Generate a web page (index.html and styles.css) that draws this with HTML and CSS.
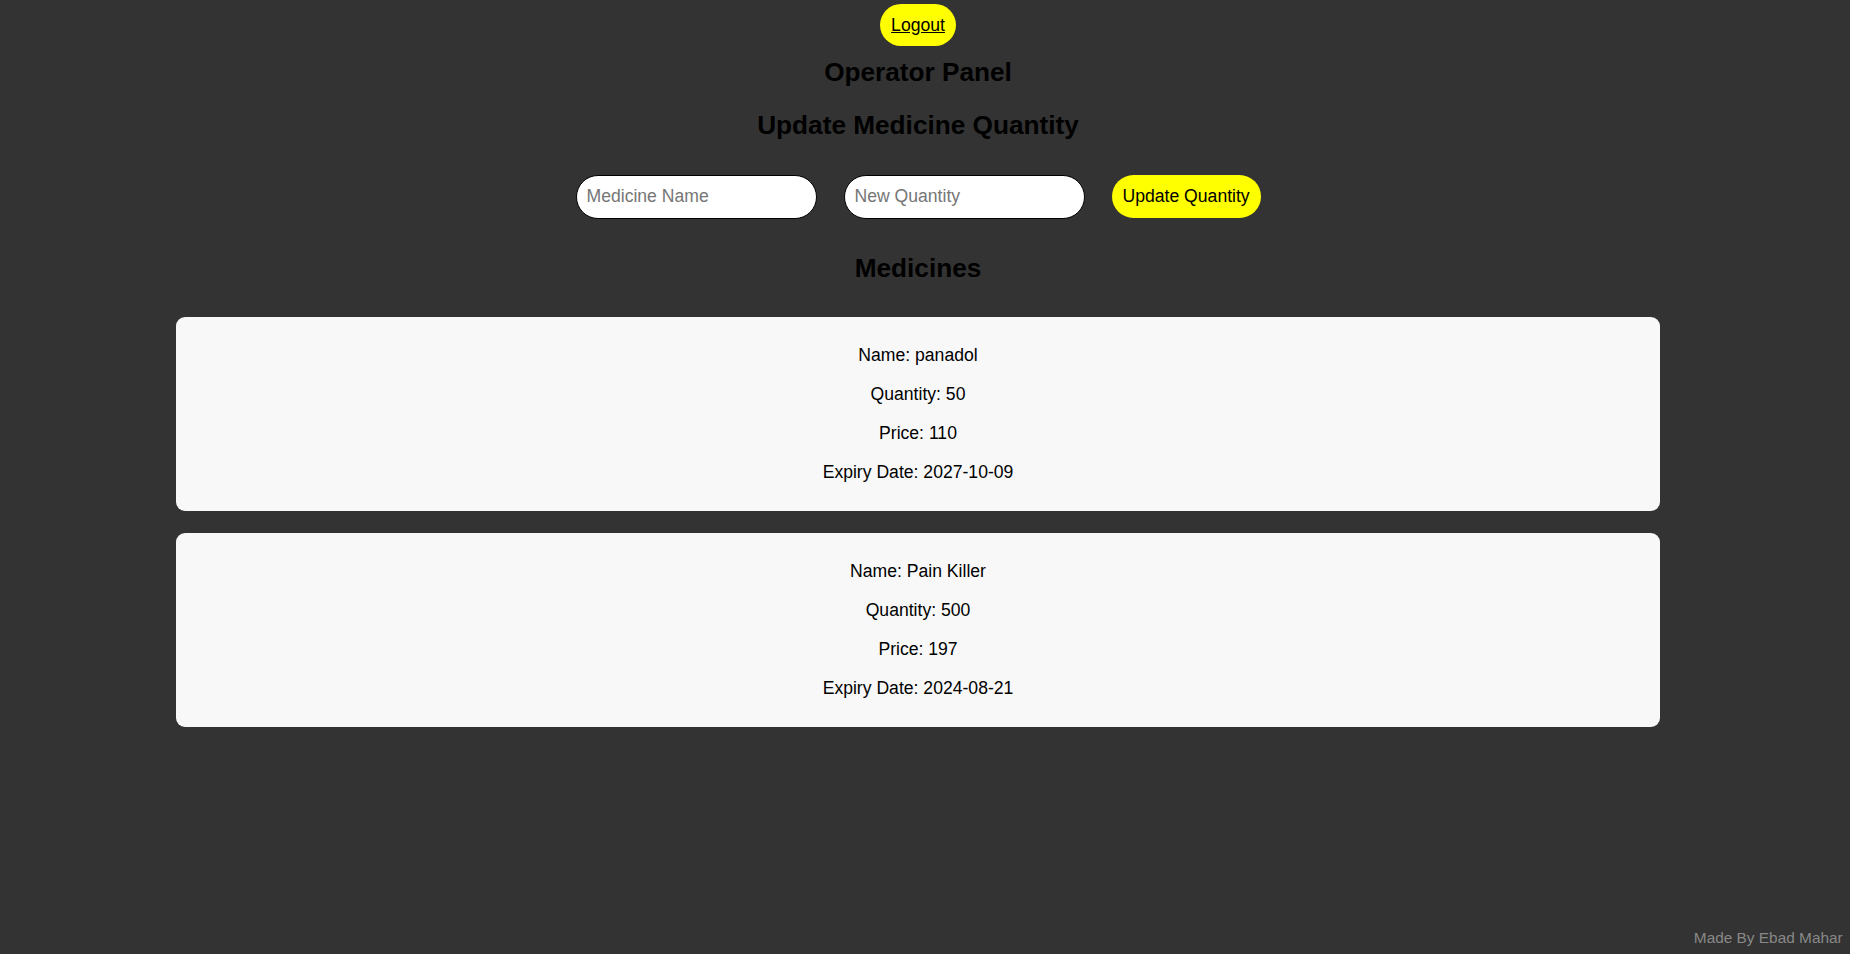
FILE: index.html
```html
<!DOCTYPE html>
<html lang="en">
<head>
<meta charset="utf-8">
<title>Operator Panel</title>
<link rel="stylesheet" href="styles.css">
</head>
<body>
<div class="page">
  <header class="top">
    <a class="logout" href="#">Logout</a>
  </header>
  <h2 class="section-title panel-title">Operator Panel</h2>
  <h2 class="section-title update-title">Update Medicine Quantity</h2>
  <form class="update-form">
    <input class="field" type="text" placeholder="Medicine Name">
    <input class="field" type="text" placeholder="New Quantity">
    <button class="update-btn" type="button">Update Quantity</button>
  </form>
  <h2 class="section-title medicines-title">Medicines</h2>
  <div class="cards">
    <div class="card">
      <p>Name: panadol</p>
      <p>Quantity: 50</p>
      <p>Price: 110</p>
      <p>Expiry Date: 2027-10-09</p>
    </div>
    <div class="card">
      <p>Name: Pain Killer</p>
      <p>Quantity: 500</p>
      <p>Price: 197</p>
      <p>Expiry Date: 2024-08-21</p>
    </div>
  </div>
  <footer class="credit">Made By Ebad Mahar</footer>
</div>
</body>
</html>
```
FILE: styles.css
```css
html, body {
  margin: 0;
  padding: 0;
  background: #333333;
}

body {
  font-family: "Liberation Sans", Arial, sans-serif;
  font-size: 17.6px;
  color: #000;
}

.page {
  min-height: 954px;
  box-sizing: border-box;
  padding-right: 14px;
  display: flex;
  flex-direction: column;
  align-items: center;
}

.top {
  padding-top: 4px;
}

.logout {
  display: inline-block;
  background: #ffff00;
  color: #000;
  padding: 11px 11px;
  border-radius: 22px;
  text-decoration: underline;
  line-height: 20.2px;
}

.section-title {
  margin: 0;
  font-size: 26.2px;
  font-weight: bold;
  line-height: 30.3px;
}

.panel-title {
  margin-top: 10.9px;
}

.update-title {
  margin-top: 23px;
}

.update-form {
  margin-top: 34.3px;
  display: flex;
  align-items: center;
  gap: 27px;
}

.field {
  box-sizing: border-box;
  width: 241px;
  height: 44px;
  border: 1px solid #000;
  border-radius: 22px;
  padding: 0 10px;
  font-family: "Liberation Sans", Arial, sans-serif;
  font-size: 17.6px;
  background: #fff;
  color: #000;
  outline: none;
}

.field::placeholder {
  color: #767676;
}

.update-btn {
  box-sizing: border-box;
  height: 43px;
  width: 149px;
  padding: 0 11px;
  border: none;
  border-radius: 22px;
  background: #ffff00;
  color: #000;
  font-family: "Liberation Sans", Arial, sans-serif;
  font-size: 17.6px;
  white-space: nowrap;
}

.medicines-title {
  margin-top: 34.4px;
}

.cards {
  margin-top: 33.3px;
  display: flex;
  flex-direction: column;
  gap: 22px;
}

.card {
  box-sizing: border-box;
  width: 1484px;
  padding: 10.2px 8px;
  background: #f8f8f8;
  border-radius: 9px;
  text-align: center;
}

.card p {
  margin: 17.6px 0;
  line-height: 21.4px;
}

.credit {
  margin-top: auto;
  align-self: flex-end;
  margin-right: -6.7px;
  padding-bottom: 8px;
  font-size: 15.4px;
  line-height: 17.5px;
  color: #888888;
}
```
